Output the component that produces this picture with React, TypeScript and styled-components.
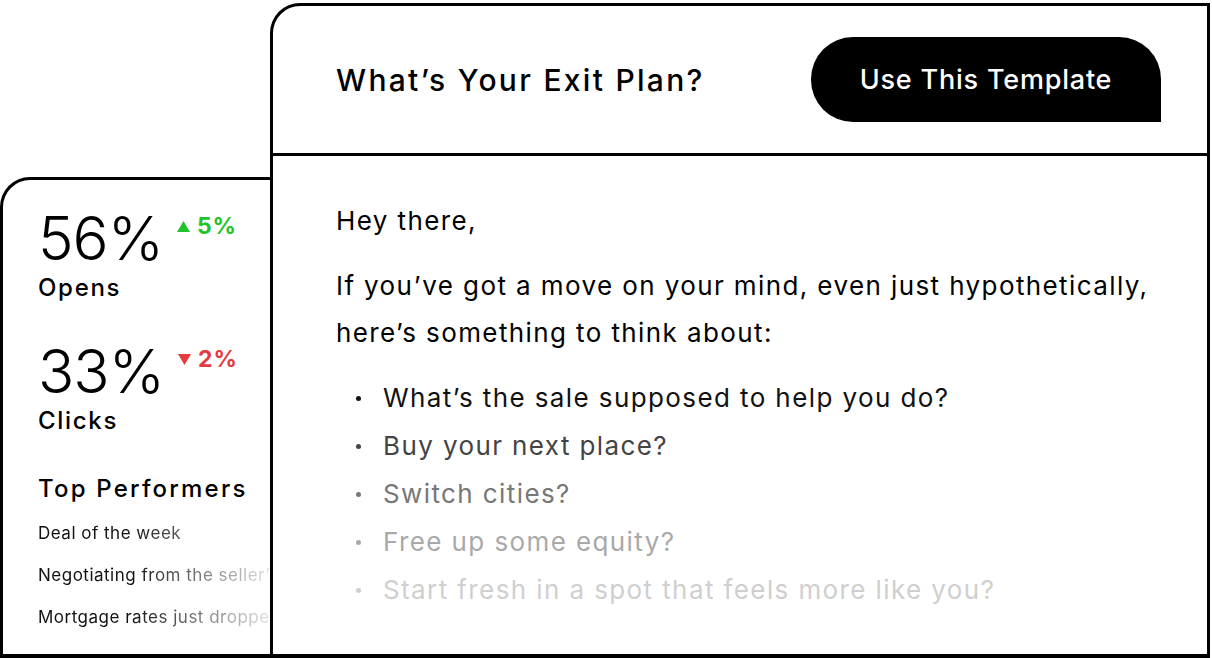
import styled, { createGlobalStyle } from 'styled-components';

const GlobalStyle = createGlobalStyle`
  html, body {
    margin: 0;
    padding: 0;
    background: #ffffff;
  }
  body {
    font-family: Inter, "Noto Sans", sans-serif;
    color: #000;
  }
`;

const Stage = styled.div`
  width: 1212px;
  height: 658px;
  display: flex;
  align-items: flex-end;
  overflow: hidden;
`;

const StatsCard = styled.aside`
  box-sizing: border-box;
  width: 270px;
  height: 481px;
  border: 3px solid #000;
  border-right: none;
  border-bottom-width: 4px;
  border-top-left-radius: 30px;
  padding: 28px 0 0 35px;
  overflow: hidden;
  white-space: nowrap;
`;

const Stat = styled.div`
  margin-bottom: 38px;
`;

const StatTop = styled.div`
  display: flex;
  align-items: flex-start;
  gap: 14px;
`;

const StatValue = styled.div`
  font-size: 60px;
  font-weight: 300;
  line-height: 60px;
  letter-spacing: -1px;
`;

const Delta = styled.div<{ $up: boolean }>`
  display: flex;
  align-items: center;
  gap: 7px;
  margin-top: 4px;
  font-size: 23px;
  font-weight: 700;
  letter-spacing: 1px;
  color: ${(p) => (p.$up ? '#1fc42a' : '#e53a3e')};
`;

const StatLabel = styled.div`
  margin-top: 5px;
  font-size: 24px;
  font-weight: 500;
  line-height: 30px;
  letter-spacing: 1.7px;
`;

const SectionTitle = styled.div`
  font-size: 24px;
  font-weight: 500;
  letter-spacing: 2.2px;
  margin: 18px 0 20px;
`;

const PerformerList = styled.ul`
  list-style: none;
  margin: 0;
  padding: 0;
  display: flex;
  flex-direction: column;
  gap: 22px;
  font-size: 17px;
  letter-spacing: 0.5px;
  color: #111;
  mask-image: linear-gradient(to right, #000 40%, rgba(0, 0, 0, 0.12) 100%);
  -webkit-mask-image: linear-gradient(to right, #000 40%, rgba(0, 0, 0, 0.12) 100%);
`;

const TemplateCard = styled.section`
  box-sizing: border-box;
  width: 940px;
  height: 655px;
  border: 3px solid #000;
  border-bottom-width: 4px;
  border-top-left-radius: 30px;
  display: flex;
  flex-direction: column;
  overflow: hidden;
`;

const Header = styled.header`
  height: 147px;
  border-bottom: 3px solid #000;
  display: flex;
  align-items: center;
  justify-content: space-between;
  padding: 0 46px 0 63px;
  flex-shrink: 0;
`;

const Title = styled.h1`
  margin: 0;
  font-size: 30px;
  font-weight: 500;
  letter-spacing: 2.3px;
`;

const UseButton = styled.button`
  width: 350px;
  height: 85px;
  border: none;
  background: #000;
  color: #fff;
  font-family: inherit;
  font-size: 27px;
  font-weight: 500;
  letter-spacing: 0.8px;
  border-radius: 42px 42px 0 42px;
  cursor: pointer;
`;

const Body = styled.div`
  padding: 41px 30px 0 63px;
  font-size: 26px;
  line-height: 47px;
  letter-spacing: 1.4px;
  white-space: nowrap;
`;

const Para = styled.p`
  margin: 0 0 18px;
`;

const Bullets = styled.ul`
  list-style: none;
  margin: 0;
  padding: 0 0 0 20px;
`;

const Bullet = styled.li<{ $tone: string }>`
  position: relative;
  padding-left: 27px;
  line-height: 48px;
  color: ${(p) => p.$tone};
  &::before {
    content: '';
    position: absolute;
    left: 0;
    top: 22px;
    width: 5px;
    height: 5px;
    border-radius: 50%;
    background: ${(p) => p.$tone};
  }
`;

const Triangle = ({ up }: { up: boolean }) => (
  <svg width="13" height="11" viewBox="0 0 13 11">
    <path d={up ? 'M6.5 0 L13 11 L0 11 Z' : 'M0 0 L13 0 L6.5 11 Z'} fill="currentColor" />
  </svg>
);

const bullets = [
  { text: 'What’s the sale supposed to help you do?', tone: '#111111' },
  { text: 'Buy your next place?', tone: '#444444' },
  { text: 'Switch cities?', tone: '#777777' },
  { text: 'Free up some equity?', tone: '#a9a9a9' },
  { text: 'Start fresh in a spot that feels more like you?', tone: '#cfcfcf' },
];

export default function App() {
  return (
    <>
      <GlobalStyle />
      <Stage>
        <StatsCard>
          <Stat>
            <StatTop>
              <StatValue>56%</StatValue>
              <Delta $up>
                <Triangle up />
                5%
              </Delta>
            </StatTop>
            <StatLabel>Opens</StatLabel>
          </Stat>
          <Stat>
            <StatTop>
              <StatValue>33%</StatValue>
              <Delta $up={false}>
                <Triangle up={false} />
                2%
              </Delta>
            </StatTop>
            <StatLabel>Clicks</StatLabel>
          </Stat>
          <SectionTitle>Top Performers</SectionTitle>
          <PerformerList>
            <li>Deal of the week</li>
            <li>Negotiating from the seller’s side</li>
            <li>Mortgage rates just dropped</li>
          </PerformerList>
        </StatsCard>
        <TemplateCard>
          <Header>
            <Title>What’s Your Exit Plan?</Title>
            <UseButton>Use This Template</UseButton>
          </Header>
          <Body>
            <Para>Hey there,</Para>
            <Para>
              If you’ve got a move on your mind, even just hypothetically,
              <br />
              here’s something to think about:
            </Para>
            <Bullets>
              {bullets.map((b) => (
                <Bullet key={b.text} $tone={b.tone}>
                  {b.text}
                </Bullet>
              ))}
            </Bullets>
          </Body>
        </TemplateCard>
      </Stage>
    </>
  );
}
